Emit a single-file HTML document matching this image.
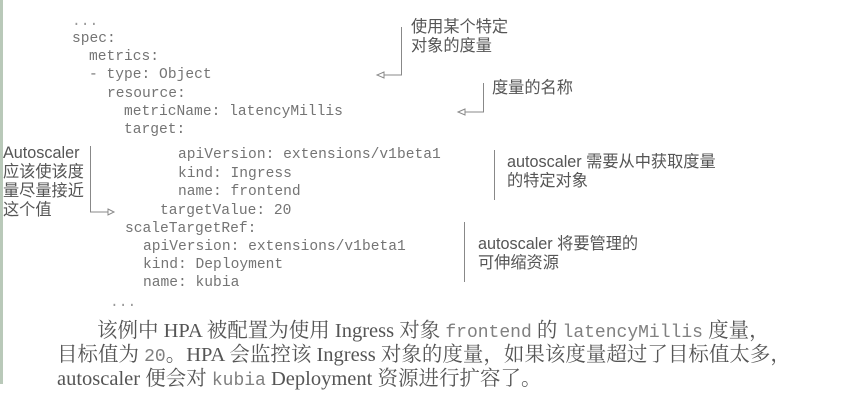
<!DOCTYPE html>
<html><head><meta charset="utf-8"><style>
body{margin:0;width:853px;height:415px;background:#fff;position:relative;overflow:hidden}
.strip{position:absolute;left:0;top:0;width:3px;height:384px;background:#b9c9b9}
.c{position:absolute;font-family:"Liberation Mono",monospace;font-size:14.6px;color:#747474;white-space:pre;line-height:16px}
.a{position:absolute;font-family:"Liberation Sans","Noto Sans CJK SC",sans-serif;font-size:16.2px;color:#555;white-space:pre;line-height:19px}
.p{position:absolute;font-family:"Liberation Serif","Noto Serif CJK SC",serif;font-size:20.5px;color:#555;white-space:nowrap;line-height:22px}
.p code{font-family:"Liberation Mono",monospace;font-size:18px;color:#808080}
</style></head><body>
<div class="strip"></div>
<div class="c" style="left:72px;top:14px;color:#999">...</div>
<div class="c" style="left:72px;top:31px">spec:</div>
<div class="c" style="left:89px;top:49px">metrics:</div>
<div class="c" style="left:89px;top:67px">- type: Object</div>
<div class="c" style="left:107px;top:86px">resource:</div>
<div class="c" style="left:124px;top:104px">metricName: latencyMillis</div>
<div class="c" style="left:124px;top:122px">target:</div>
<div class="c" style="left:178px;top:147px">apiVersion: extensions/v1beta1</div>
<div class="c" style="left:178px;top:166px">kind: Ingress</div>
<div class="c" style="left:178px;top:184px">name: frontend</div>
<div class="c" style="left:160px;top:203px">targetValue: 20</div>
<div class="c" style="left:125px;top:221px">scaleTargetRef:</div>
<div class="c" style="left:143px;top:239px">apiVersion: extensions/v1beta1</div>
<div class="c" style="left:143px;top:257px">kind: Deployment</div>
<div class="c" style="left:143px;top:275px">name: kubia</div>
<div class="c" style="left:110px;top:295px;color:#999">...</div>

<div class="a" style="left:3px;top:144px">Autoscaler
应该使该度
量尽量接近
这个值</div>
<div class="a" style="left:411px;top:18px">使用某个特定
对象的度量</div>
<div class="a" style="left:492px;top:79px">度量的名称</div>
<div class="a" style="left:507px;top:153px">autoscaler 需要从中获取度量
的特定对象</div>
<div class="a" style="left:478px;top:235px">autoscaler 将要管理的
可伸缩资源</div>

<svg width="853" height="415" style="position:absolute;left:0;top:0" fill="none" stroke="#888" stroke-width="1">
<path d="M90.5 146V212H108"/><path d="M108 209l6 3l-6 3z"/>
<path d="M401.5 27V75H384"/><path d="M384 72l-7 3l7 3z"/>
<path d="M483.5 83V112H465"/><path d="M465 109l-7 3l7 3z"/>
<path d="M494.5 150V200"/>
<path d="M464.5 222V282"/>
</svg>

<div class="p" style="left:97px;top:320px">该例中 HPA 被配置为使用 Ingress 对象 <code>frontend</code> 的 <code>latencyMillis</code> 度量，</div>
<div class="p" style="left:57px;top:344px">目标值为 <code>20</code>。HPA 会监控该 Ingress 对象的度量，如果该度量超过了目标值太多，</div>
<div class="p" style="left:57px;top:368px">autoscaler 便会对 <code>kubia</code> Deployment 资源进行扩容了。</div>
</body></html>
